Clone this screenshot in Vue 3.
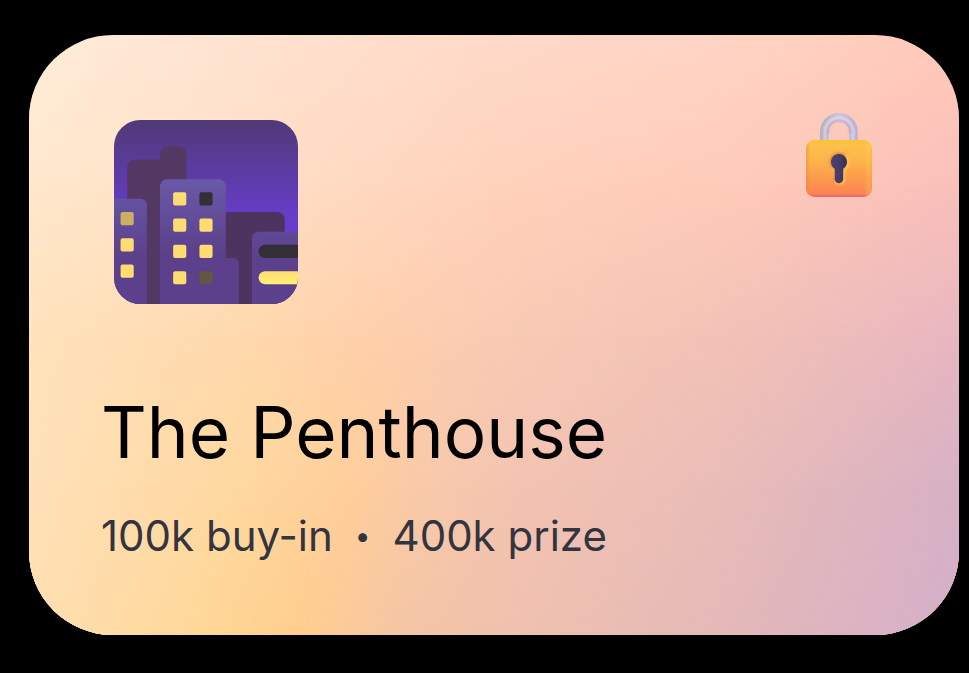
<script setup>
const room = { name: 'The Penthouse', buyIn: '100k buy-in', prize: '400k prize' }
const windows = [
  { x: 1, y: 14, tone: 'dim' },
  { x: 1, y: 18, tone: 'lit' },
  { x: 1, y: 22, tone: 'lit' },
  { x: 9, y: 11, tone: 'lit' },
  { x: 9, y: 15, tone: 'lit' },
  { x: 9, y: 19, tone: 'lit' },
  { x: 9, y: 23, tone: 'lit' },
  { x: 13, y: 11, tone: 'dark' },
  { x: 13, y: 15, tone: 'lit' },
  { x: 13, y: 19, tone: 'lit' },
  { x: 13, y: 23, tone: 'faint' },
]
</script>

<template>
  <main class="page">
    <article class="card">
      <div class="wash wash-1"></div>
      <div class="wash wash-2"></div>
      <div class="wash wash-3"></div>
      <div class="wash wash-4"></div>
      <header class="head">
        <svg class="city" viewBox="0 0 28 28" role="img" aria-label="City at night">
          <defs>
            <linearGradient id="sky" x1="0" y1="0" x2="0" y2="1">
              <stop offset="0" stop-color="#503a76" />
              <stop offset=".55" stop-color="#673dcd" />
              <stop offset="1" stop-color="#673dd2" />
            </linearGradient>
            <linearGradient id="tower" gradientUnits="userSpaceOnUse" x1="0" y1="9" x2="0" y2="20">
              <stop offset="0" stop-color="#695aa8" />
              <stop offset="1" stop-color="#5d408c" />
            </linearGradient>
            <linearGradient id="side" gradientUnits="userSpaceOnUse" x1="0" y1="12" x2="0" y2="21">
              <stop offset="0" stop-color="#6352a0" />
              <stop offset="1" stop-color="#5d408c" />
            </linearGradient>
            <linearGradient id="glow" x1="0" y1="0" x2="0" y2="1">
              <stop offset="0" stop-color="#ffdc72" />
              <stop offset="1" stop-color="#fff176" />
            </linearGradient>
            <clipPath id="tile"><rect width="28" height="28" rx="4" /></clipPath>
          </defs>
          <g clip-path="url(#tile)">
            <rect width="28" height="28" fill="url(#sky)" />
            <path fill="#533864" d="M2 28V7.3Q2 6 3.3 6H7V5.3Q7 4 8.3 4H9.700Q11 4 11 5.300V28Z" />
            <path fill="#4d3460" d="M16 28V14H24.700Q26 14 26 15.300V28Z" />
            <path fill="url(#side)" d="M0 28V12H3.900Q5 12 5 13.100V28Z" />
            <path fill="url(#tower)" d="M7 28V10.200Q7 9 8.200 9H15.800Q17 9 17 10.200V21H18Q19 21 19 22V28Z" />
            <path fill="url(#side)" d="M21 28V18.200Q21 17 22.200 17H28V28Z" />
            <rect v-for="(w, i) in windows" :key="i" :class="w.tone" :x="w.x" :y="w.y" width="2" height="2" rx=".3" />
            <path fill="#322f36" d="M28 19H23a1 1 0 0 0 0 2h5Z" />
            <path fill="url(#glow)" d="M28 23H23a1 1 0 0 0 0 2h5Z" />
          </g>
        </svg>
        <svg class="lock" viewBox="0 0 66 84" role="img" aria-label="Locked">
          <defs>
            <linearGradient id="body" x1="0" y1="0" x2="0" y2="1">
              <stop offset="0" stop-color="#f8c434" />
              <stop offset=".1" stop-color="#fdc04c" />
              <stop offset=".35" stop-color="#fdb44a" />
              <stop offset=".65" stop-color="#fb9c4c" />
              <stop offset=".94" stop-color="#fb8452" />
              <stop offset="1" stop-color="#ec6070" />
            </linearGradient>
            <linearGradient id="edge" x1="0" y1="0" x2="1" y2="0">
              <stop offset="0" stop-color="#e28b30" stop-opacity=".5" />
              <stop offset=".06" stop-color="#e28b30" stop-opacity="0" />
              <stop offset=".88" stop-color="#ffd154" stop-opacity="0" />
              <stop offset=".95" stop-color="#ffcb5a" stop-opacity=".35" />
              <stop offset="1" stop-color="#ffb345" stop-opacity=".2" />
            </linearGradient>
            <linearGradient id="metal" x1="0" y1="0" x2="1" y2="0">
              <stop offset="0" stop-color="#b8b0bf" />
              <stop offset=".5" stop-color="#cdc5da" />
              <stop offset="1" stop-color="#bcafd0" />
            </linearGradient>
            <linearGradient id="hole" x1="0" y1="0" x2="1" y2="0">
              <stop offset="0" stop-color="#4d4074" />
              <stop offset=".6" stop-color="#453a66" />
              <stop offset="1" stop-color="#353052" />
            </linearGradient>
            <filter id="soft" x="-30%" y="-30%" width="160%" height="160%"><feGaussianBlur stdDeviation="1.2" /></filter>
          </defs>
          <path class="shackle" stroke="url(#metal)" stroke-width="8.600" d="M18.300 30V18.900a14.600 14.600 0 0 1 29.200 0V30" />
          <path class="shackle" stroke="#e9e4f2" stroke-width="3" opacity=".7" filter="url(#soft)" d="M19 28V19a14 14 0 0 1 28 0V28" />
          <path class="shackle" stroke="#9a7fc0" stroke-width="1.500" opacity=".4" filter="url(#soft)" d="M22 21V18.500a11 11 0 0 1 22 0V21" />
          <rect y="27" width="66" height="57" rx="8.500" fill="url(#body)" />
          <rect y="27" width="66" height="57" rx="8.500" fill="url(#edge)" />
          <g filter="url(#soft)">
            <path fill="#ffbd55" d="M25 49a9.500 9.500 0 1 1 14.500 8V67a6 6 0 0 1-11 2Z" />
            <path fill="#e5892f" d="M23.500 48a9.500 9.500 0 0 1 16-6L34 68h-6V56Q23.500 53 23.500 48Z" />
          </g>
          <path fill="url(#hole)" d="M25 49a8 8 0 1 1 12.200 6.800V66a4.200 4.200 0 0 1-8.400 0V55.800A8 8 0 0 1 25 49Z" />
        </svg>
      </header>
      <h1 class="title">{{ room.name }}</h1>
      <p class="meta">
        <span>{{ room.buyIn }}</span>
        <span class="dot">•</span>
        <span>{{ room.prize }}</span>
      </p>
    </article>
  </main>
</template>

<style>
body {
  background: #000;
}
</style>

<style scoped>
.page {
  padding: 35px 10px 38px 29px;
  font-family: Inter, "Liberation Sans", sans-serif;
}
.card {
  position: relative;
  isolation: isolate;
  overflow: hidden;
  padding: 78px 87px 73px 72px;
  border-radius: 84px;
  background: linear-gradient(90deg, #ffedda, #ffe2d0 25%, #ffdac9 50%, #ffd4c4 75%, #ffcab8);
}
/* Each wash fades in over one quarter of the card's height. */
.wash {
  position: absolute;
  inset: 0;
  z-index: -1;
}
.wash-1 {
  background: linear-gradient(90deg, #ffe8cc, #ffdec5 25%, #ffd2bb 50%, #ffcbb9 75%, #f9c0ba);
  mask-image: linear-gradient(transparent, #000 25%);
}
.wash-2 {
  background: linear-gradient(90deg, #ffe3bc, #ffd8ac 25%, #ffcfab 38%, #f9cbb3 50%, #f2c2b6 75%, #e8b6c0);
  mask-image: linear-gradient(transparent 25%, #000 50%);
}
.wash-3 {
  background: linear-gradient(90deg, #ffe1b8, #ffd8a0 22%, #ffcf9a 34%, #f8c9aa 43%, #f3c4b1 52%, #e9bcb8 75%, #d7b1c4);
  mask-image: linear-gradient(transparent 50%, #000 75%);
}
.wash-4 {
  background: linear-gradient(90deg, #ffdfb2, #ffd696 20%, #ffce8e 29%, #f4c5a4 40%, #efc1ae 52%, #e3b8b8 75%, #d4afca);
  mask-image: linear-gradient(transparent 75%, #000);
}
.head {
  display: flex;
  justify-content: space-between;
  align-items: flex-start;
}
.city {
  width: 184px;
  height: 184px;
  margin: 7px 13px 0;
}
.lock {
  width: 66px;
  height: 84px;
}
.lit {
  fill: #ffdc72;
}
.dim {
  fill: #ccb061;
}
.faint {
  fill: #635643;
}
.dark {
  fill: #322f36;
}
.shackle {
  fill: none;
}
.title {
  margin: 84px 0 0;
  color: #000;
  font-size: 71px;
  font-weight: 400;
  line-height: 88px;
}
.meta {
  display: flex;
  gap: 22px;
  margin: 34px 0 0;
  color: #32343f;
  font-size: 42px;
  line-height: 52px;
}
.dot {
  font-size: 28px;
}
</style>
